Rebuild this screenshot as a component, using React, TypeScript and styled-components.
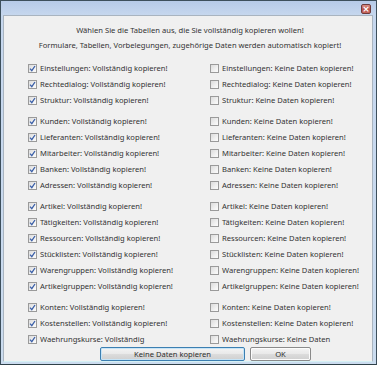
import React from "react";
import styled, { createGlobalStyle } from "styled-components";

const GlobalStyle = createGlobalStyle`
  html, body {
    margin: 0;
    padding: 0;
    background: #f0f0f0;
  }
  * {
    box-sizing: border-box;
  }
`;

type Row = { name: string; left: string; right: string };

const groups: Row[][] = [
  [
    { name: "Einstellungen", left: "Vollständig kopieren!", right: "Keine Daten kopieren!" },
    { name: "Rechtedialog", left: "Vollständig kopieren!", right: "Keine Daten kopieren!" },
    { name: "Struktur", left: "Vollständig kopieren!", right: "Keine Daten kopieren!" },
  ],
  [
    { name: "Kunden", left: "Vollständig kopieren!", right: "Keine Daten kopieren!" },
    { name: "Lieferanten", left: "Vollständig kopieren!", right: "Keine Daten kopieren!" },
    { name: "Mitarbeiter", left: "Vollständig kopieren!", right: "Keine Daten kopieren!" },
    { name: "Banken", left: "Vollständig kopieren!", right: "Keine Daten kopieren!" },
    { name: "Adressen", left: "Vollständig kopieren!", right: "Keine Daten kopieren!" },
  ],
  [
    { name: "Artikel", left: "Vollständig kopieren!", right: "Keine Daten kopieren!" },
    { name: "Tätigkeiten", left: "Vollständig kopieren!", right: "Keine Daten kopieren!" },
    { name: "Ressourcen", left: "Vollständig kopieren!", right: "Keine Daten kopieren!" },
    { name: "Stücklisten", left: "Vollständig kopieren!", right: "Keine Daten kopieren!" },
    { name: "Warengruppen", left: "Vollständig kopieren!", right: "Keine Daten kopieren!" },
    { name: "Artikelgruppen", left: "Vollständig kopieren!", right: "Keine Daten kopieren!" },
  ],
  [
    { name: "Konten", left: "Vollständig kopieren!", right: "Keine Daten kopieren!" },
    { name: "Kostenstellen", left: "Vollständig kopieren!", right: "Keine Daten kopieren!" },
    { name: "Waehrungskurse", left: "Vollständig", right: "Keine Daten" },
  ],
];

const CheckBox = ({ checked }: { checked: boolean }) => (
  <Box>
    {checked && (
      <svg width="7" height="7" viewBox="0 0 7 7">
        <path d="M1 3.6 L2.8 5.6 L6 1" fill="none" stroke="#3a5fa8" strokeWidth="1.3" />
      </svg>
    )}
  </Box>
);

const App = () => {
  return (
    <Window>
      <GlobalStyle />
      <TitleBar>
        <CloseButton>×</CloseButton>
      </TitleBar>
      <Client>
        <Intro>
          <p>Wählen Sie die Tabellen aus, die Sie vollständig kopieren wollen!</p>
          <p>Formulare, Tabellen, Vorbelegungen, zugehörige Daten werden automatisch kopiert!</p>
        </Intro>
        <Groups>
          {groups.map((rows, gi) => (
            <Group key={gi}>
              {rows.map((r) => (
                <React.Fragment key={r.name}>
                  <Option>
                    <CheckBox checked />
                    {r.name}: {r.left}
                  </Option>
                  <Option>
                    <CheckBox checked={false} />
                    {r.name}: {r.right}
                  </Option>
                </React.Fragment>
              ))}
            </Group>
          ))}
        </Groups>
        <Buttons>
          <Button $default $width={145}>Keine Daten kopieren</Button>
          <Button $width={61}>OK</Button>
        </Buttons>
      </Client>
    </Window>
  );
};

export default App;

const Window = styled.div`
  width: 377px;
  height: 365px;
  display: flex;
  flex-direction: column;
  background: linear-gradient(180deg, #b6cae8 0px, #c6d7ee 14px, #cbdcef 100%);
  border: 1px solid #3d4f5c;
  border-bottom-color: #2f4048;
  padding: 0 3px 2px 2px;
`;

const TitleBar = styled.div`
  height: 14px;
  display: flex;
  justify-content: flex-end;
  align-items: flex-start;
  padding-top: 3px;
  padding-right: 2px;
`;

const CloseButton = styled.div`
  width: 10px;
  height: 10px;
  border: 1px solid #6e3b3b;
  border-radius: 2px;
  background: linear-gradient(180deg, #d88c84 0%, #b9504a 60%, #c8675e 100%);
  color: #fff;
  font-family: "DejaVu Sans", sans-serif;
  font-size: 9px;
  line-height: 8px;
  text-align: center;
  font-weight: bold;
`;

const Client = styled.div`
  flex: 1;
  background: #f0f0f0;
  border: 1px solid #a9b4c0;
  border-bottom-color: #d4f0f4;
  display: flex;
  flex-direction: column;
  font-family: "Noto Sans", sans-serif;
  font-size: 7.6px;
  color: #333333;
`;

const Intro = styled.div`
  padding-top: 7px;
  text-align: center;
  padding-left: 4px;

  p {
    margin: 0;
    line-height: 15px;
  }
`;

const Groups = styled.div`
  margin-top: 7px;
  padding-left: 24px;
  display: flex;
  flex-direction: column;
  gap: 5px;
`;

const Group = styled.div`
  display: grid;
  grid-template-columns: 182px 1fr;
`;

const Option = styled.div`
  display: flex;
  align-items: center;
  gap: 3px;
  height: 16px;
  white-space: nowrap;
`;

const Box = styled.span`
  width: 9px;
  height: 9px;
  flex-shrink: 0;
  border: 1px solid #9a9a9a;
  background: linear-gradient(135deg, #dcdcdc 0%, #f4f4f4 70%, #fbfbfb 100%);
  display: flex;
  align-items: center;
  justify-content: center;
`;

const Buttons = styled.div`
  margin-top: 0;
  display: flex;
  gap: 5px;
  padding-left: 96px;
`;

const Button = styled.button<{ $default?: boolean; $width: number }>`
  width: ${(p) => p.$width}px;
  height: 14px;
  padding: 0;
  font-family: "Noto Sans", sans-serif;
  font-size: 7.6px;
  color: #2e2e2e;
  border-radius: 2px;
  border: 1px solid ${(p) => (p.$default ? "#3c7fb1" : "#8a8a8a")};
  box-shadow: inset 0 0 0 1px ${(p) => (p.$default ? "#c6e4f7" : "#fcfcfc")};
  background: linear-gradient(180deg, #f4f4f4 0%, #e9e9e9 48%, #dcdcdc 52%, #cfcfcf 100%);
  line-height: 12px;
`;
